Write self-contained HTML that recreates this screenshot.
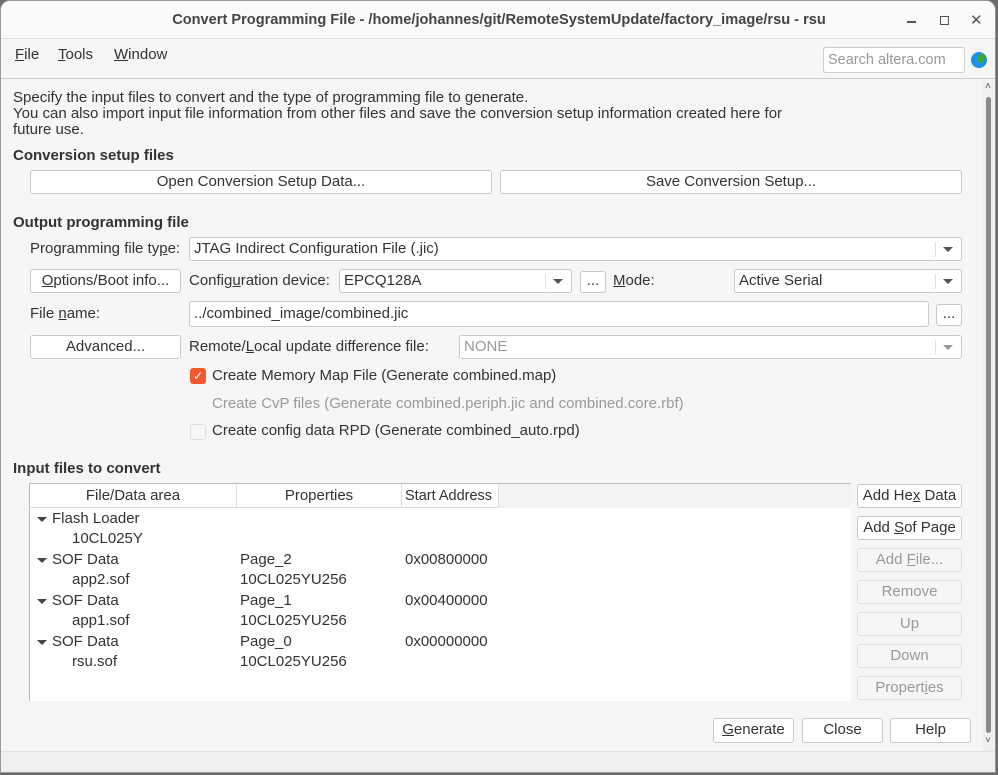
<!DOCTYPE html>
<html><head><meta charset="utf-8"><style>
*{box-sizing:border-box;margin:0;padding:0}
body{width:998px;height:775px;overflow:hidden;background:#6b6b6b;font-family:"Liberation Sans","DejaVu Sans",sans-serif;font-size:15px;color:#333}
.a{position:absolute;white-space:nowrap}
#win{position:absolute;left:0;top:0;width:996px;height:773px;background:#f6f6f6;border-radius:10px 10px 0 0;border:1px solid #999;overflow:hidden}
.btn{position:absolute;background:#fff;border:1px solid #c8c8c8;border-radius:3px;text-align:center;line-height:22px;color:#333}
.dis{background:#f6f6f7;color:#999;border-color:#ddd}
.cb{position:absolute;background:#fff;border:1px solid #c8c8c8;border-radius:3px;padding-left:4px;line-height:22px}
.cb .ar{position:absolute;right:8px;top:9px;width:0;height:0;border-left:5px solid transparent;border-right:5px solid transparent;border-top:5px solid #555}
.cb .sep{position:absolute;right:25px;top:4px;width:1px;height:15px;background:#e2e2e2}
u{text-decoration:underline}
.tri{position:absolute;width:0;height:0;border-left:5px solid transparent;border-right:5px solid transparent;border-top:5px solid #444}
</style></head><body>
<div id="win">
<div class="a" style="left:0;top:0;width:996px;height:38px;background:#fafafa;border-bottom:1px solid #ddd"></div>
<div class="a" style="left:0;top:11px;width:996px;text-align:center;font-weight:bold;color:#444;font-size:14.6px">Convert Programming File - /home/johannes/git/RemoteSystemUpdate/factory_image/rsu - rsu</div>
<div class="a" style="left:906px;top:20px;width:9px;height:1.5px;background:#555"></div>
<div class="a" style="left:939px;top:15px;width:9px;height:9px;border:1.5px solid #555"></div>
<div class="a" style="left:969px;top:10px;font-size:15px;color:#555">✕</div>
<div class="a" style="left:0;top:39px;width:996px;height:39px;background:#f6f6f6;border-bottom:1px solid #c9c9c9"></div>
<div class="a" style="left:14px;top:45px"><u>F</u>ile</div>
<div class="a" style="left:57px;top:45px"><u>T</u>ools</div>
<div class="a" style="left:113px;top:45px"><u>W</u>indow</div>
<div class="a" style="left:822px;top:46px;width:142px;height:26px;background:#fff;border:1px solid #ccc;border-radius:3px;color:#999;padding:4px 0 0 4px;font-size:14.5px">Search altera.com</div>
<div class="a" style="left:970px;top:51px;width:16px;height:16px;border-radius:50%;background:#1e90e6;overflow:hidden"><div style="position:absolute;left:6px;top:2px;width:8px;height:9px;background:#3aa840;border-radius:50% 30% 50% 40%"></div></div>
<div class="a" style="left:981px;top:80px;width:13px;height:670px;background:#f0f0f0"></div>
<div class="a" style="left:984px;top:80px;font-size:10px;color:#555">˄</div>
<div class="a" style="left:985px;top:96px;width:5px;height:636px;background:#8a8a8a;border-radius:3px"></div>
<div class="a" style="left:984px;top:734px;font-size:10px;color:#555">˅</div>
<div class="a" style="left:0;top:750px;width:996px;height:23px;background:#efefef;border-top:1px solid #e2e2e2"></div>

<div class="a" style="left:12px;top:89px;line-height:16px">Specify the input files to convert and the type of programming file to generate.<br>You can also import input file information from other files and save the conversion setup information created here for<br>future use.</div>
<div class="a" style="left:12px;top:146px;font-weight:bold">Conversion setup files</div>
<div class="btn" style="left:29px;top:169px;width:462px;height:24px">Open Conversion Setup Data...</div>
<div class="btn" style="left:499px;top:169px;width:462px;height:24px">Save Conversion Setup...</div>
<div class="a" style="left:12px;top:213px;font-weight:bold">Output programming file</div>
<div class="a" style="left:29px;top:239px">Programming file ty<u>p</u>e:</div>
<div class="cb" style="left:188px;top:236px;width:773px;height:24px">JTAG Indirect Configuration File (.jic)<div class="sep"></div><div class="ar"></div></div>
<div class="btn" style="left:29px;top:268px;width:151px;height:24px"><u>O</u>ptions/Boot info...</div>
<div class="a" style="left:188px;top:271px">Config<u>u</u>ration device:</div>
<div class="cb" style="left:338px;top:268px;width:233px;height:24px">EPCQ128A<div class="sep"></div><div class="ar"></div></div>
<div class="btn" style="left:579px;top:270px;width:26px;height:22px;line-height:18px">...</div>
<div class="a" style="left:612px;top:271px"><u>M</u>ode:</div>
<div class="cb" style="left:733px;top:268px;width:228px;height:24px">Active Serial<div class="sep"></div><div class="ar"></div></div>
<div class="a" style="left:29px;top:304px">File <u>n</u>ame:</div>
<div class="cb" style="left:188px;top:300px;width:740px;height:26px;line-height:24px">../combined_image/combined.jic</div>
<div class="btn" style="left:935px;top:303px;width:26px;height:22px;line-height:18px">...</div>
<div class="btn" style="left:29px;top:334px;width:151px;height:24px">Advanced...</div>
<div class="a" style="left:188px;top:337px">Remote/<u>L</u>ocal update difference file:</div>
<div class="cb dis" style="left:458px;top:334px;width:503px;height:24px;color:#999">NONE<div class="sep"></div><div class="ar" style="border-top-color:#999"></div></div>
<div class="a" style="left:189px;top:367px;width:16px;height:16px;background:#ef5a32;border-radius:3px;color:#fff;font-size:12px;text-align:center;line-height:16px">✓</div>
<div class="a" style="left:211px;top:366px">Create Memory Map File (Generate combined.map)</div>
<div class="a" style="left:211px;top:394px;color:#999">Create CvP files (Generate combined.periph.jic and combined.core.rbf)</div>
<div class="a" style="left:189px;top:423px;width:16px;height:16px;background:#f8f8f8;border:1px solid #ddd;border-radius:3px"></div>
<div class="a" style="left:211px;top:421px">Create config data RPD (Generate combined_auto.rpd)</div>
<div class="a" style="left:12px;top:459px;font-weight:bold">Input files to convert</div>

<div class="a" style="left:28px;top:482px;width:822px;height:218px;background:#fff;border:1px solid #bbb;border-bottom:none;border-right:none">
 <div class="a" style="left:0;top:0;width:821px;height:24px;background:#f3f3f3"></div>
 <div class="a" style="left:0;top:0;width:207px;height:24px;background:#fff;border-right:1px solid #ddd;border-bottom:1px solid #ddd;text-align:center;line-height:24px">File/Data area</div>
 <div class="a" style="left:207px;top:0;width:165px;height:24px;background:#fff;border-right:1px solid #ddd;border-bottom:1px solid #ddd;text-align:center;line-height:24px">Properties</div>
 <div class="a" style="left:372px;top:0;width:97px;height:24px;background:#fff;border-right:1px solid #ddd;border-bottom:1px solid #ddd;line-height:24px;padding-left:3px;font-size:14.5px">Start Address</div>
 <div class="tri" style="left:7px;top:33px"></div><div class="a" style="left:22px;top:26px">Flash Loader</div>
 <div class="a" style="left:42px;top:46px">10CL025Y</div>
 <div class="tri" style="left:7px;top:74px"></div><div class="a" style="left:22px;top:67px">SOF Data</div><div class="a" style="left:210px;top:67px">Page_2</div><div class="a" style="left:375px;top:67px">0x00800000</div>
 <div class="a" style="left:42px;top:87px">app2.sof</div><div class="a" style="left:210px;top:87px">10CL025YU256</div>
 <div class="tri" style="left:7px;top:115px"></div><div class="a" style="left:22px;top:108px">SOF Data</div><div class="a" style="left:210px;top:108px">Page_1</div><div class="a" style="left:375px;top:108px">0x00400000</div>
 <div class="a" style="left:42px;top:128px">app1.sof</div><div class="a" style="left:210px;top:128px">10CL025YU256</div>
 <div class="tri" style="left:7px;top:156px"></div><div class="a" style="left:22px;top:149px">SOF Data</div><div class="a" style="left:210px;top:149px">Page_0</div><div class="a" style="left:375px;top:149px">0x00000000</div>
 <div class="a" style="left:42px;top:169px">rsu.sof</div><div class="a" style="left:210px;top:169px">10CL025YU256</div>
</div>
<div class="btn" style="left:856px;top:483px;width:105px;height:24px">Add He<u>x</u> Data</div>
<div class="btn" style="left:856px;top:515px;width:105px;height:24px">Add <u>S</u>of Page</div>
<div class="btn dis" style="left:856px;top:547px;width:105px;height:24px">Add <u>F</u>ile...</div>
<div class="btn dis" style="left:856px;top:579px;width:105px;height:24px">Remove</div>
<div class="btn dis" style="left:856px;top:611px;width:105px;height:24px">Up</div>
<div class="btn dis" style="left:856px;top:643px;width:105px;height:24px">Down</div>
<div class="btn dis" style="left:856px;top:675px;width:105px;height:24px">Propert<u>i</u>es</div>
<div class="btn" style="left:712px;top:717px;width:81px;height:25px"><u>G</u>enerate</div>
<div class="btn" style="left:801px;top:717px;width:81px;height:25px">Close</div>
<div class="btn" style="left:889px;top:717px;width:81px;height:25px">Help</div>
</div>
</body></html>
